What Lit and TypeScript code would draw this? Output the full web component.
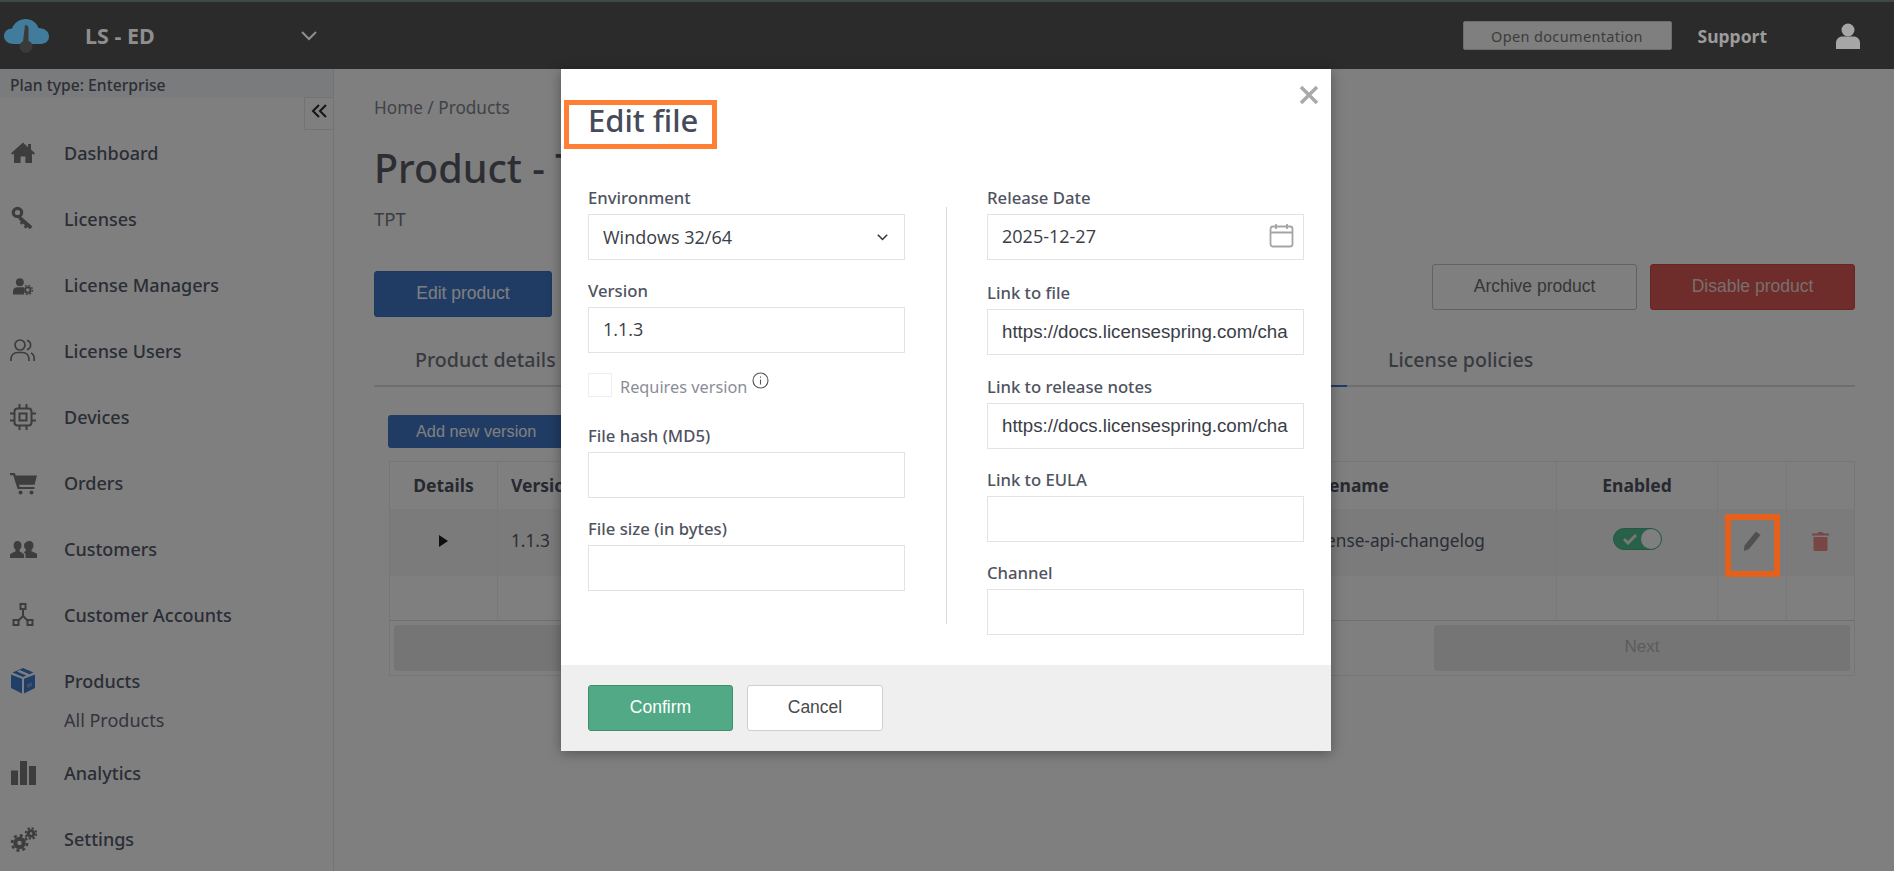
import { LitElement, html, css, svg } from "lit";
import { customElement } from "lit/decorators.js";

const icons = {
  home: svg`<path d="M13 2.500 1 13.200l1.400 1.500L4 13.400V23h6.600v-6.600h4.800V23H22v-9.600l1.600 1.300 1.400-1.500-4-3.600V4h-3v3.300z"/>`,
  key: svg`<circle cx="7.500" cy="6.500" r="4.200" fill="none" stroke="currentColor" stroke-width="3.200"/><path d="m10.500 10 12 10.500-2.600 2.800-2.600-2.200-1.600 1.600-2-1.900 1.300-1.600-2-1.700-1.300 1.300-2-2 1.200-1.400-2.600-2.400z"/>`,
  manager: svg`<g transform="translate(3 5) scale(.76)"><circle cx="9" cy="7" r="5.200"/><path d="M0 23v-4c0-3.600 2.600-5.400 6-5.400h6c1 0 1.800.2 2.600.5V23z"/><circle cx="19.500" cy="17" r="3.600" fill="none" stroke="currentColor" stroke-width="2.600"/><circle cx="19.500" cy="17" r="6.100" fill="none" stroke="currentColor" stroke-width="1.600" stroke-dasharray="2.400 2.400"/></g>`,
  users: svg`<g fill="none" stroke="currentColor" stroke-width="1.700"><circle cx="10" cy="7" r="5"/><path d="M1 23v-2c0-4 3-6.500 6.500-6.500h5c3.500 0 6.500 2.500 6.500 6.500v2M17 2.400c2.400.6 3.600 2.500 3.600 4.600s-1.200 4-3.600 4.600M21 15c2 .9 3.200 3 3.200 5.500V23"/></g>`,
  chip: svg`<g fill="none" stroke="currentColor" stroke-width="2"><rect x="4.500" y="4.500" width="17" height="17" rx="3"/><rect x="9.500" y="9.500" width="7" height="7"/><path d="M9.500 0v4M16.500 0v4M9.500 22v4M16.500 22v4M0 9.500h4M0 16.500h4M22 9.500h4M22 16.500h4"/></g>`,
  cart: svg`<path d="M0 3h4.800l1 2.600H27l-2.400 9.200H9l.7 2.200h14.800v2H7.600L3.200 5.200H0z"/><circle cx="10.500" cy="22.500" r="2"/><circle cx="21.500" cy="22.500" r="2"/>`,
  customers: svg`<path d="M7.500 5C10 5 11.500 7 11.500 9.600c0 2-.9 3.400-2 4.200v1.400l3.600 2.200c.6.400 1 1 1 1.800V22H0v-2.800c0-.8.400-1.400 1-1.800l4.600-2.200v-1.400c-1.100-.8-2-2.200-2-4.200C3.600 7 5 5 7.500 5z"/><path d="M19.500 5C22 5 23.500 7 23.500 9.600c0 2-.9 3.400-2 4.200v1.400l5 2.200c.6.400 1 1 1 1.800V22H15.500v-3.300c0-1-.6-1.700-1.500-2.200l-.5-.3 2.500-1.400v-1c-1.100-.8-2-2.600-2-4.600C14 7 17 5 19.500 5z"/>`,
  tree: svg`<g fill="none" stroke="currentColor" stroke-width="2"><rect x="10.500" y="2" width="5" height="5"/><rect x="3.500" y="18" width="5" height="5"/><rect x="17.500" y="18" width="5" height="5"/><path d="M13 7v7M13 14l-5 5M13 14l5 5"/></g>`,
  box: svg`<path d="M13 0 2.500 4.600 13 9l3.400-1.400L6.800 3.400l3-1.300 9.600 4.200L23.500 4.600z"/><path d="M1 6.500V20l11 5.600V10.800zM25 6.500V20l-11 5.600V10.800z"/><path d="M17 16.500l5-2.200v3.600l-5 2.200z" fill="#7f9fc8"/>`,
  bars: svg`<path d="M1 10.500h7V25H1zM10 1h7v24h-7zM19 6h7v19h-7z"/>`,
  cogs: svg`<g fill="none" stroke="currentColor"><circle cx="9.500" cy="17" r="4.200" stroke-width="4"/><circle cx="9.500" cy="17" r="7.600" stroke-width="2.600" stroke-dasharray="3 2.970"/><circle cx="21" cy="7.500" r="2.800" stroke-width="3"/><circle cx="21" cy="7.500" r="5.300" stroke-width="2" stroke-dasharray="2.300 1.860"/></g>`,
};

const nav = [
  { label: "Dashboard", icon: icons.home },
  { label: "Licenses", icon: icons.key },
  { label: "License Managers", icon: icons.manager },
  { label: "License Users", icon: icons.users },
  { label: "Devices", icon: icons.chip },
  { label: "Orders", icon: icons.cart },
  { label: "Customers", icon: icons.customers },
  { label: "Customer Accounts", icon: icons.tree },
  { label: "Products", icon: icons.box, active: true, sub: "All Products" },
  { label: "Analytics", icon: icons.bars },
  { label: "Settings", icon: icons.cogs },
];

@customElement("app-root")
export class AppRoot extends LitElement {
  static styles = css`
    :host {
      display: block;
      position: relative;
      width: 100%;
      height: 871px;
      overflow: hidden;
      font-family: "Noto Sans", sans-serif;
      background: #fff;
    }
    .header {
      box-sizing: border-box;
      height: 69px;
      background: #2b2b2b;
      border-top: 2px solid #3c4b45;
      display: flex;
      align-items: center;
    }
    .logo {
      width: 46px;
      height: 34px;
      margin-left: 4px;
    }
    .org {
      margin-left: 35px;
      width: 216px;
      color: #8e8e8e;
      font-size: 21.5px;
      font-weight: 700;
    }
    .org-chevron {
      width: 16px;
      height: 10px;
      fill: none;
      stroke: #8e8e8e;
      stroke-width: 2;
    }
    .header-right {
      margin-left: auto;
      display: flex;
      align-items: center;
    }
    .doc-btn {
      box-sizing: border-box;
      width: 209px;
      height: 29px;
      background: #7f7f7f;
      border: 1px solid #6d6d6d;
      border-radius: 2px;
      color: #3c3c3c;
      font-size: 14.5px;
      letter-spacing: 0.35px;
      display: flex;
      align-items: center;
      justify-content: center;
    }
    .support {
      margin-left: 26px;
      color: #9c9c9c;
      font-size: 17.5px;
      font-weight: 700;
    }
    .user {
      width: 24px;
      height: 26px;
      margin: 0 34px 0 69px;
      fill: #a6a6a6;
    }
    .page {
      display: flex;
      height: 802px;
    }
    .sidebar {
      box-sizing: border-box;
      width: 334px;
      flex: none;
      background: #fff;
      border-right: 1px solid #e8e8e8;
      position: relative;
    }
    .plan {
      height: 29px;
      background: #f4f6f8;
      padding-left: 10px;
      font-size: 15.7px;
      font-weight: 500;
      line-height: 32px;
      color: #5b5e6e;
    }
    .collapse {
      position: absolute;
      top: 28px;
      right: 0;
      box-sizing: border-box;
      width: 29px;
      height: 33px;
      border: 1px solid #e6e6e6;
      border-right: 0;
      display: flex;
      align-items: center;
      justify-content: center;
      padding-bottom: 5px;
    }
    .collapse svg {
      width: 17px;
      height: 14px;
      fill: none;
      stroke: #2a2a30;
      stroke-width: 2;
    }
    nav {
      margin-top: 22px;
    }
    .item {
      height: 66px;
      display: flex;
      align-items: center;
      color: #555a6c;
      font-size: 18px;
      font-weight: 500;
    }
    .item svg {
      width: 27px;
      height: 27px;
      margin: 0 27px 0 10px;
      fill: #7a7a7a;
      color: #7a7a7a;
      flex: none;
    }
    .item.active svg {
      fill: #3f7fd4;
      color: #3f7fd4;
    }
    .sub {
      height: 26px;
      margin: -7px 0 7px 64px;
      line-height: 26px;
      color: #666a7a;
      font-size: 18px;
    }
    .main {
      flex: 1;
      min-width: 0;
      box-sizing: border-box;
      padding: 28px 39px 0 40px;
      background: #fff;
    }
    .crumbs {
      height: 22px;
      line-height: 22px;
      font-size: 17.2px;
      color: #808590;
    }
    h1 {
      margin: 25px 0 0;
      height: 48px;
      line-height: 48px;
      font-size: 39.5px;
      font-weight: 500;
      color: #5a5c68;
    }
    .code {
      margin-top: 17px;
      height: 20px;
      line-height: 20px;
      font-size: 18.5px;
      color: #777a85;
    }
    .actions {
      margin-top: 35px;
      display: flex;
      align-items: flex-start;
      gap: 13px;
    }
    .btn {
      box-sizing: border-box;
      height: 46px;
      border-radius: 3px;
      display: flex;
      align-items: center;
      justify-content: center;
      font-family: "Liberation Sans", sans-serif;
      font-size: 17.5px;
      padding-bottom: 2px;
    }
    .btn.edit {
      width: 178px;
      margin: 7px auto 0 0;
      background: #4078c8;
      border: 1px solid #3a70bd;
      color: #fff;
    }
    .btn.archive {
      width: 205px;
      background: #fff;
      border: 1px solid #c4c4c4;
      color: #6e6e6e;
    }
    .btn.disable {
      width: 205px;
      background: #dd5a54;
      border: 1px solid #d44a46;
      color: #f0dddd;
    }
    .tabs {
      margin-top: 13px;
      height: 57px;
      display: flex;
      border-bottom: 2px solid #dcdcdc;
      box-sizing: border-box;
      font-size: 19.6px;
      font-weight: 500;
      color: #707480;
    }
    .tab {
      box-sizing: border-box;
      padding: 16px 41px 0;
      white-space: nowrap;
    }
    .tab.details {
      width: 223px;
    }
    .tab.active {
      width: 750px;
      border-bottom: 2px solid #4078c8;
      height: 57px;
    }
    .add {
      box-sizing: border-box;
      margin: 28px 0 13px 14px;
      width: 180px;
      height: 33px;
      font-family: "Liberation Sans", sans-serif;
      font-size: 16.3px;
      background: #4078c8;
      color: #fff;
      border-radius: 3px;
      display: flex;
      align-items: center;
      padding-left: 28px;
    }
    .table {
      margin-left: 15px;
      border: 1px solid #ededed;
      font-size: 17.2px;
      color: #555a6c;
    }
    .row {
      display: grid;
      grid-template-columns: 108px 150px 648px 261px 161px 69px 67px;
    }
    .row > div {
      box-sizing: border-box;
      display: flex;
      align-items: center;
      padding-left: 13px;
      border-right: 1px solid #f0f0f0;
      white-space: nowrap;
      overflow: hidden;
    }
    .row > div:last-child {
      border-right: 0;
    }
    .row > .center {
      justify-content: center;
      padding-left: 0;
    }
    .head {
      height: 47px;
      font-weight: 700;
      font-size: 17.5px;
      color: #4e5262;
    }
    .head > div {
      padding-bottom: 2px;
    }
    .data {
      height: 67px;
      background: #f6f6f6;
    }
    .data > div {
      padding-bottom: 4px;
    }
    .blank {
      height: 44px;
    }
    .pager {
      height: 55px;
      border-top: 1px solid #dfdfdf;
      box-sizing: border-box;
      display: flex;
      padding: 4px;
      gap: 5px;
    }
    .pager div {
      background: #ebebeb;
      border-radius: 3px;
      color: #b8b8b8;
      font-family: "Liberation Sans", sans-serif;
      font-size: 17px;
      display: flex;
      align-items: center;
      justify-content: center;
      padding-bottom: 2px;
    }
    .pager .prev,
    .pager .next {
      flex: 0 0 416px;
    }
    .pager .mid {
      flex: 1;
      background: none;
    }
    .arrow {
      width: 0;
      height: 0;
      border-left: 9px solid #1e1e1e;
      border-top: 6px solid transparent;
      border-bottom: 6px solid transparent;
    }
    .toggle {
      box-sizing: border-box;
      width: 49px;
      height: 22px;
      margin-bottom: 3px;
      border-radius: 11px;
      background: #50c095;
      border: 1px solid #4caf8a;
      display: flex;
      align-items: center;
      justify-content: flex-end;
      position: relative;
    }
    .toggle svg {
      position: absolute;
      left: 9px;
      top: 4px;
      width: 14px;
      height: 12px;
      fill: none;
      stroke: #eee;
      stroke-width: 3;
    }
    .knob {
      width: 20px;
      height: 20px;
      border-radius: 50%;
      background: #fff;
    }
    .pencil {
      width: 18px;
      height: 20px;
      fill: #a0a0a0;
    }
    .trash {
      width: 17px;
      height: 20px;
      fill: #f08e8a;
    }
    .overlay {
      position: absolute;
      top: 69px;
      left: 0;
      right: 0;
      bottom: 0;
      background: rgba(0, 0, 0, 0.5);
    }
    .modal {
      position: absolute;
      left: 561px;
      top: 0;
      width: 770px;
      height: 682px;
      background: #fff;
      box-shadow: 0 2px 12px rgba(0, 0, 0, 0.35);
      display: flex;
      flex-direction: column;
      font-family: "Open Sans", sans-serif;
    }
    .modal-head {
      height: 119px;
      box-sizing: border-box;
      padding: 29px 0 0 27px;
      position: relative;
    }
    .modal-head h2 {
      margin: 0;
      font-size: 31px;
      line-height: 44px;
      font-weight: 500;
      color: #464a59;
      font-family: "Noto Sans", sans-serif;
    }
    .close {
      position: absolute;
      top: 16px;
      right: 12px;
      width: 20px;
      height: 20px;
      fill: none;
      stroke: #a9a9a9;
      stroke-width: 3.5;
    }
    .form {
      flex: 1;
      display: flex;
      padding: 0 27px;
    }
    .col {
      width: 317px;
    }
    .rule {
      width: 1px;
      margin: 19px 40px 41px 41px;
      background: #d9d9d9;
    }
    .field {
      margin-bottom: 22px;
    }
    .field.tight {
      margin-bottom: 21px;
    }
    .field.loose {
      margin-bottom: 23px;
    }
    label {
      display: block;
      height: 20px;
      line-height: 20px;
      margin-bottom: 6px;
      font-size: 16.7px;
      font-weight: 500;
      color: #4f5361;
      font-family: "Noto Sans", sans-serif;
    }
    .input {
      box-sizing: border-box;
      height: 46px;
      border: 1px solid #e3e3e3;
      padding: 0 11px 0 14px;
      display: flex;
      align-items: center;
      justify-content: space-between;
      font-size: 18px;
      color: #3a3d46;
      white-space: nowrap;
      overflow: hidden;
    }
    .input.raised {
      padding-bottom: 3px;
    }
    .input.link {
      font-family: "Liberation Sans", sans-serif;
      font-size: 18.7px;
      padding-right: 0;
    }
    .input svg.chev {
      width: 11px;
      height: 7px;
      fill: none;
      stroke: #333;
      stroke-width: 2;
      margin: 0 5px 0 0;
    }
    .input svg.cal {
      width: 25px;
      height: 25px;
      fill: none;
      stroke: #a5a5a5;
      stroke-width: 1.8;
      margin-right: -2px;
    }
    .check-row {
      display: flex;
      align-items: center;
      margin: -2px 0 29px;
      height: 24px;
      color: #8a8d97;
      font-size: 16.3px;
      font-family: "Noto Sans", sans-serif;
    }
    .check-text {
      padding-top: 3px;
    }
    .check {
      box-sizing: border-box;
      width: 24px;
      height: 24px;
      border: 1px solid #eee;
      margin-right: 8px;
    }
    .info {
      width: 17px;
      height: 17px;
      margin: -9px 0 0 5px;
      fill: none;
      stroke: #555;
      stroke-width: 1.1;
    }
    .footer {
      height: 86px;
      background: #efefef;
      display: flex;
      align-items: center;
      padding-left: 27px;
      gap: 14px;
    }
    .footer .btn {
      height: 46px;
      font-size: 17.5px;
      padding-bottom: 2px;
    }
    .confirm {
      width: 145px;
      background: #52a985;
      border: 1px solid #3f8f6e;
      color: #fff;
    }
    .cancel {
      width: 136px;
      background: #fff;
      border: 1px solid #cfcfcf;
      color: #4a4a4a;
    }
    .mark {
      position: absolute;
      box-sizing: border-box;
      pointer-events: none;
    }
    .mark.title {
      left: 564px;
      top: 100px;
      width: 153px;
      height: 49px;
      border: 5px solid #ff7f35;
    }
    .mark.row-edit {
      left: 1725px;
      top: 514px;
      width: 55px;
      height: 63px;
      border: 6px solid #e5601a;
    }
  `;

  render() {
    return html`
      <div class="header">
        <svg class="logo" viewBox="0 0 46 34">
          <path d="M10 25C4 25 0 21.500 0 17c0-4.500 3.500-7.500 8-7.500C10 4 15.500 0 21.500 0 28 0 33 4 34.500 9c6 0 10.500 3.500 10.500 8.500S41 25 35.500 25z" fill="#417c9d"/>
          <path d="M21 6c2.200 0 3.500 1 3.500 3v13c3 1.200 4 3 4 5.500 0 3.500-3 6.500-6.500 6.500S15.500 31 15.500 27.500c0-2.500 1.500-4.300 3.500-5.300z" fill="#3a3a3a"/>
        </svg>
        <div class="org">LS - ED</div>
        <svg class="org-chevron" viewBox="0 0 16 10"><path d="m1 1 7 7 7-7"/></svg>
        <div class="header-right">
          <div class="doc-btn">Open documentation</div>
          <div class="support">Support</div>
          <svg class="user" viewBox="0 0 24 26">
            <circle cx="12" cy="7" r="6.500"/>
            <path d="M0 26v-6c0-4 3-6.500 6.500-6.500h11c3.500 0 6.500 2.500 6.500 6.500v6z"/>
          </svg>
        </div>
      </div>

      <div class="page">
        <div class="sidebar">
          <div class="plan">Plan type: Enterprise</div>
          <div class="collapse">
            <svg viewBox="0 0 17 14"><path d="M8 1 2 7l6 6M15 1 9 7l6 6"/></svg>
          </div>
          <nav>
            ${nav.map(
              (n) => html`
                <div class="item ${n.active ? "active" : ""}">
                  <svg viewBox="0 0 27 27">${n.icon}</svg>${n.label}
                </div>
                ${n.sub ? html`<div class="sub">${n.sub}</div>` : ""}
              `
            )}
          </nav>
        </div>

        <div class="main">
          <div class="crumbs">Home / Products</div>
          <h1>Product - TPT</h1>
          <div class="code">TPT</div>
          <div class="actions">
            <div class="btn edit">Edit product</div>
            <div class="btn archive">Archive product</div>
            <div class="btn disable">Disable product</div>
          </div>
          <div class="tabs">
            <div class="tab details">Product details</div>
            <div class="tab active">Versions</div>
            <div class="tab">License policies</div>
          </div>
          <div class="add">Add new version</div>
          <div class="table">
            <div class="row head">
              <div class="center">Details</div>
              <div>Version</div>
              <div>Environment</div>
              <div>Filename</div>
              <div class="center">Enabled</div>
              <div></div>
              <div></div>
            </div>
            <div class="row data">
              <div class="center"><span class="arrow"></span></div>
              <div>1.1.3</div>
              <div>Windows 32/64</div>
              <div>license-api-changelog</div>
              <div class="center">
                <span class="toggle">
                  <svg viewBox="0 0 14 12"><path d="m1 6 4 4 8-8"/></svg>
                  <span class="knob"></span>
                </span>
              </div>
              <div class="center">
                <svg class="pencil" viewBox="0 0 18 20"><path d="M13 0.500 17.500 4 6 18l-5 2 .5-5.500z"/></svg>
              </div>
              <div class="center">
                <svg class="trash" viewBox="0 0 17 20"><path d="M0 2.500h5.500L6.500 1h4l1 1.500H17v2H0zM1.500 6h14v12.500c0 .8-.7 1.500-1.500 1.500H3c-.8 0-1.500-.7-1.500-1.500z"/></svg>
              </div>
            </div>
            <div class="row blank"><div></div><div></div><div></div><div></div><div></div><div></div><div></div></div>
            <div class="pager">
              <div class="prev">Previous</div>
              <div class="mid"></div>
              <div class="next">Next</div>
            </div>
          </div>
        </div>
      </div>

      <div class="overlay">
        <div class="modal">
          <div class="modal-head">
            <h2>Edit file</h2>
            <svg class="close" viewBox="0 0 20 20"><path d="m2 2 16 16M18 2 2 18"/></svg>
          </div>
          <div class="form">
            <div class="col">
              <div class="field tight">
                <label>Environment</label>
                <div class="input">
                  Windows 32/64
                  <svg class="chev" viewBox="0 0 14 9"><path d="m1 1 6 6 6-6"/></svg>
                </div>
              </div>
              <div class="field">
                <label>Version</label>
                <div class="input raised">1.1.3</div>
              </div>
              <div class="check-row">
                <span class="check"></span><span class="check-text">Requires version</span>
                <svg class="info" viewBox="0 0 17 17">
                  <circle cx="8.500" cy="8.500" r="7.500"/>
                  <path d="M8.500 7.500v5M8.500 4.500v1.300"/>
                </svg>
              </div>
              <div class="field tight">
                <label>File hash (MD5)</label>
                <div class="input"></div>
              </div>
              <div class="field">
                <label>File size (in bytes)</label>
                <div class="input"></div>
              </div>
            </div>
            <div class="rule"></div>
            <div class="col">
              <div class="field loose">
                <label>Release Date</label>
                <div class="input raised">
                  2025-12-27
                  <svg class="cal" viewBox="0 0 25 25">
                    <rect x="1.500" y="3.500" width="22" height="20" rx="2.500"/>
                    <path d="M1.500 9.500h22M7 1v5M18 1v5"/>
                  </svg>
                </div>
              </div>
              <div class="field">
                <label>Link to file</label>
                <div class="input link">https://docs.licensespring.com/cha</div>
              </div>
              <div class="field tight">
                <label>Link to release notes</label>
                <div class="input link">https://docs.licensespring.com/cha</div>
              </div>
              <div class="field tight">
                <label>Link to EULA</label>
                <div class="input"></div>
              </div>
              <div class="field">
                <label>Channel</label>
                <div class="input"></div>
              </div>
            </div>
          </div>
          <div class="footer">
            <div class="btn confirm">Confirm</div>
            <div class="btn cancel">Cancel</div>
          </div>
        </div>
      </div>

      <div class="mark title"></div>
      <div class="mark row-edit"></div>
    `;
  }
}
